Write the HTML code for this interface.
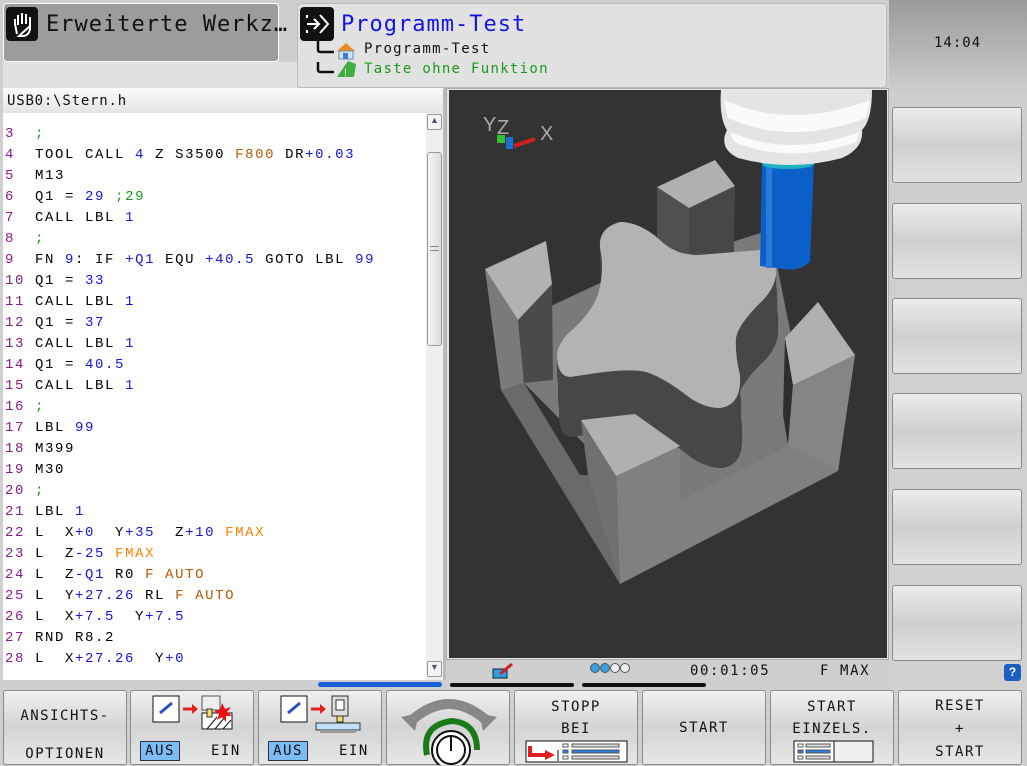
<!DOCTYPE html>
<html><head><meta charset="utf-8"><style>
*{margin:0;padding:0;box-sizing:border-box}
body{width:1027px;height:765px;background:#cfcfcf;position:relative;overflow:hidden;font-family:"Liberation Sans","DejaVu Sans",sans-serif}
.abs{position:absolute}
.mono{font-family:"DejaVu Sans Mono","Liberation Mono",monospace}
pre{font-family:"Liberation Mono",monospace;font-size:14px;letter-spacing:1.6px;line-height:21px;color:#000}
.n{color:#8b1a8b}.b{color:#1515e0}.g{color:#1a9a1a}.o{color:#ff7f00}.br{color:#b35c00}
.sk{position:absolute;top:690px;height:75px;width:124px;border:1px solid #8a8a8a;border-radius:3px;background:linear-gradient(#f0f0f0,#d4d4d4 50%,#e6e6e6);font-family:"DejaVu Sans Mono","Liberation Mono",monospace;font-size:14px;letter-spacing:1.5px;text-align:center;color:#111}
.rb{position:absolute;left:892px;width:130px;height:76px;border:1px solid #8a8a8a;border-radius:3px;background:linear-gradient(#ececec,#cfcfcf 50%,#e2e2e2)}
.aus{position:absolute;background:#7ebcf5;border:1px solid #333;width:40px;height:20px;font-size:14px;line-height:18px}
</style></head><body>
<div class="abs" style="left:297px;top:3px;width:590px;height:85px;background:#e2e2e2;border-radius:4px;border:1px solid #bbb"></div>
<div class="abs" style="left:3px;top:62px;width:294px;height:26px;background:#e2e2e2"></div>
<div class="abs" style="left:3px;top:3px;width:276px;height:59px;background:#9c9c9c;border-radius:4px;border:1px solid #fff"></div>
<div class="abs" style="left:6px;top:7px;width:32px;height:34px;background:#111;border-radius:4px"></div>
<svg class="abs" style="left:6px;top:7px" width="32" height="34"><path d="M11 27 L9 17 L9 12 M12 18 L12 8 M16 17 L16 6 M20 17 L20 7 M24 19 L24 10 L24 22 Q23 28 18 29 L13 29 Z" fill="none" stroke="#fff" stroke-width="2"/></svg>
<div class="abs mono" style="left:46px;top:12px;font-size:22px;letter-spacing:1px;color:#111">Erweiterte Werkz…</div>
<div class="abs" style="left:300px;top:7px;width:34px;height:34px;background:#111;border-radius:4px"></div>
<svg class="abs" style="left:300px;top:7px" width="34" height="34"><path d="M7 17 H19 M14 12 L19 17 L14 22" fill="none" stroke="#fff" stroke-width="2"/><path d="M20 8 L28 17 L20 26" fill="none" stroke="#fff" stroke-width="2"/><path d="M7 8 V11 M7 23 V26" stroke="#fff" stroke-width="2"/></svg>
<div class="abs mono" style="left:341px;top:12px;font-size:22px;letter-spacing:1px;color:#1515e0">Programm-Test</div>
<svg class="abs" style="left:312px;top:40px" width="50" height="40"><path d="M6 0 V10 Q6 12 9 12 H22 M6 22 V30 Q6 32 9 32 H22" fill="none" stroke="#111" stroke-width="2.5"/>
<path d="M25 11 L34 3 L43 11 Z" fill="#f08a20"/><rect x="27" y="11" width="14" height="8" fill="#cfe4f7" stroke="#6b8fb0"/><rect x="31" y="13" width="5" height="6" fill="#3a7ad0"/>
<path d="M25 37 L36 21 L44 24 L42 37 Z" fill="#3fae3f"/><text x="32" y="36" font-size="10" fill="#fff" font-family="Liberation Sans">!</text></svg>
<div class="abs mono" style="left:364px;top:41px;font-size:14px;letter-spacing:1.3px;color:#111">Programm-Test</div>
<div class="abs mono" style="left:364px;top:61px;font-size:14px;letter-spacing:1.3px;color:#1a9a1a">Taste ohne Funktion</div>
<div class="abs" style="left:889px;top:0;width:138px;height:690px;background:linear-gradient(#9a9a9a,#cfcfcf 95px,#d0d0d0)"></div>
<div class="abs mono" style="left:934px;top:35px;font-size:14px;letter-spacing:1px;color:#111">14:04</div>
<div class="rb" style="top:107px"></div><div class="rb" style="top:203px"></div><div class="rb" style="top:298px"></div><div class="rb" style="top:393px"></div><div class="rb" style="top:489px"></div><div class="rb" style="top:585px"></div>
<div class="abs" style="left:1004px;top:664px;width:17px;height:17px;background:#1a5fc0;border-radius:3px;color:#fff;font-size:12px;font-weight:bold;text-align:center;line-height:17px">?</div>
<div class="abs" style="left:3px;top:88px;width:440px;height:25px;background:linear-gradient(#fafafa,#e4e4e4)"></div>
<div class="abs mono" style="left:7px;top:93px;font-size:14px;letter-spacing:0.8px;color:#111">USB0:\Stern.h</div>
<div class="abs" style="left:3px;top:113px;width:440px;height:567px;background:#fff;border-right:1px solid #aaa"></div>
<div class="abs" style="left:443px;top:88px;width:3px;height:592px;background:#bbb"></div>
<pre class="abs" style="left:5px;top:124px"><span class="n">3</span>  <span class="g">;</span>
<span class="n">4</span>  TOOL CALL <span class="b">4</span> Z S3500 <span class="br">F800</span> DR<span class="b">+0.03</span>
<span class="n">5</span>  M13
<span class="n">6</span>  Q1 = <span class="b">29</span> <span class="g">;29</span>
<span class="n">7</span>  CALL LBL <span class="b">1</span>
<span class="n">8</span>  <span class="g">;</span>
<span class="n">9</span>  FN <span class="b">9</span>: IF <span class="b">+Q1</span> EQU <span class="b">+40.5</span> GOTO LBL <span class="b">99</span>
<span class="n">10</span> Q1 = <span class="b">33</span>
<span class="n">11</span> CALL LBL <span class="b">1</span>
<span class="n">12</span> Q1 = <span class="b">37</span>
<span class="n">13</span> CALL LBL <span class="b">1</span>
<span class="n">14</span> Q1 = <span class="b">40.5</span>
<span class="n">15</span> CALL LBL <span class="b">1</span>
<span class="n">16</span> <span class="g">;</span>
<span class="n">17</span> LBL <span class="b">99</span>
<span class="n">18</span> M399
<span class="n">19</span> M30
<span class="n">20</span> <span class="g">;</span>
<span class="n">21</span> LBL <span class="b">1</span>
<span class="n">22</span> L  X<span class="b">+0</span>  Y<span class="b">+35</span>  Z<span class="b">+10</span> <span class="o">FMAX</span>
<span class="n">23</span> L  Z<span class="b">-25</span> <span class="o">FMAX</span>
<span class="n">24</span> L  Z<span class="b">-Q1</span> R0 <span class="br">F AUTO</span>
<span class="n">25</span> L  Y<span class="b">+27.26</span> RL <span class="br">F AUTO</span>
<span class="n">26</span> L  X<span class="b">+7.5</span>  Y<span class="b">+7.5</span>
<span class="n">27</span> RND R8.2
<span class="n">28</span> L  X<span class="b">+27.26</span>  Y<span class="b">+0</span></pre>
<div class="abs" style="left:426px;top:113px;width:17px;height:567px;background:#efefef"></div>
<div class="abs" style="left:427px;top:114px;width:15px;height:16px;border:1px solid #999;border-radius:2px;background:#f4f4f4;font-size:9px;text-align:center;color:#557">▲</div>
<div class="abs" style="left:427px;top:152px;width:15px;height:194px;border:1px solid #999;border-radius:3px;background:linear-gradient(90deg,#f4f4f4,#dcdcdc)"></div>
<div class="abs" style="left:430px;top:246px;width:9px;height:5px;border-top:1px solid #888;border-bottom:1px solid #888"></div>
<div class="abs" style="left:427px;top:661px;width:15px;height:16px;border:1px solid #999;border-radius:2px;background:#f4f4f4;font-size:9px;text-align:center;color:#557">▼</div>
<div class="abs" style="left:446px;top:88px;width:443px;height:572px;background:#e8e8e8;border:1px solid #aaa"></div>
<svg class="abs" style="left:449px;top:90px" width="438" height="568" viewBox="449 90 438 568">
<defs><path id="st" d="M598,294 Q605,270 600,248 Q598,228 620,222 Q640,222 660,240 Q675,255 698,255 L760,250 Q778,252 776,275 Q774,290 760,303 Q738,325 736,338 Q735,355 740,375 Q742,405 720,408 Q705,408 690,398 Q665,378 646,372 Q630,368 590,374 L570,377 Q557,376 557,355 Q558,342 572,330 Q592,312 598,294 Z"/></defs>
<rect x="449" y="90" width="438" height="568" fill="#333"/>
<polygon points="518,320 553,305 598,284 770,230 790,330 793,385 788,445 680,500 616,476 524,383" fill="#7a7a7a"/>
<polygon points="657,187 689,208 689,320 657,300" fill="#505050"/>
<polygon points="689,208 735,186 733,300 689,320" fill="#474747"/>
<polygon points="657,187 715,160 735,186 689,208" fill="#b0b0b0"/>
<polygon points="501,390 524,383 580,475 616,476 620,584" fill="#6a6a6a"/>
<polygon points="616,476 680,446 680,500 788,445 793,385 855,355 838,471 620,584" fill="#808080"/>
<polygon points="485,269 518,320 524,383 501,390" fill="#7a7a7a"/>
<polygon points="518,320 552,284 553,380 524,383" fill="#4a4a4a"/>
<polygon points="485,269 546,241 552,284 518,320" fill="#b2b2b2"/>
<polygon points="785,338 793,385 788,445 783,415" fill="#2e2e2e"/>
<polygon points="793,385 855,355 838,471 788,445" fill="#858585"/>
<polygon points="785,338 818,302 855,355 793,385" fill="#b0b0b0"/>
<g fill="#474747">
<use href="#st" transform="translate(2,60)"/><use href="#st" transform="translate(2,54)"/><use href="#st" transform="translate(2,48)"/><use href="#st" transform="translate(1,42)"/><use href="#st" transform="translate(1,36)"/><use href="#st" transform="translate(1,30)"/><use href="#st" transform="translate(1,24)"/><use href="#st" transform="translate(0,18)"/><use href="#st" transform="translate(0,12)"/><use href="#st" transform="translate(0,6)"/>
</g>
<polygon points="581,420 635,414 680,446 616,476" fill="#b0b0b0"/>
<polygon points="581,420 616,476 620,584 588,475" fill="#707070"/>
<use href="#st" fill="#b3b3b3"/>
<path d="M762,160 L814,160 L810,262 Q798,272 784,269 L760,266 Z" fill="#0a60c8"/>
<rect x="766" y="160" width="6" height="108" fill="#2a7ad8"/>
<ellipse cx="788" cy="164" rx="26" ry="5" fill="#20b0c0"/>
<path d="M721,90 L872,90 Q872,120 862,130 Q864,148 842,158 Q790,172 738,158 Q718,148 727,130 Q719,118 721,90 Z" fill="#e4e4e4"/>
<path d="M724,100 Q790,130 870,100 L866,118 Q790,146 728,118 Z" fill="#fafafa"/>
<path d="M730,132 Q790,158 860,132 L856,142 Q790,165 734,142 Z" fill="#fafafa"/>
<text x="483" y="131" font-size="20" fill="#aaa" font-family="Liberation Sans">Y</text>
<text x="497" y="134" font-size="20" fill="#aaa" font-family="Liberation Sans">Z</text>
<text x="540" y="140" font-size="20" fill="#aaa" font-family="Liberation Sans">X</text>
<path d="M514,146 L535,139" stroke="#d02020" stroke-width="4"/>
<rect x="497" y="135" width="8" height="8" fill="#30c030"/>
<rect x="506" y="137" width="7" height="12" fill="#1a70d0"/>
</svg>
<svg class="abs" style="left:492px;top:662px" width="26" height="20"><rect x="1" y="7" width="14" height="9" fill="#2aa0e0" stroke="#123" stroke-width="1"/><path d="M8 12 L20 2" stroke="#d02020" stroke-width="3"/></svg>
<div class="abs" style="left:590px;top:663px;font-size:0">
<span style="display:inline-block;width:10px;height:10px;border-radius:50%;background:#3aa0e0;border:1px solid #555"></span><span style="display:inline-block;width:10px;height:10px;border-radius:50%;background:#3aa0e0;border:1px solid #555"></span><span style="display:inline-block;width:10px;height:10px;border-radius:50%;background:#eee;border:1px solid #555"></span><span style="display:inline-block;width:10px;height:10px;border-radius:50%;background:#eee;border:1px solid #555"></span></div>
<div class="abs mono" style="left:690px;top:663px;font-size:14px;letter-spacing:1.6px;color:#111">00:01:05</div>
<div class="abs mono" style="left:820px;top:663px;font-size:14px;letter-spacing:1.6px;color:#111">F MAX</div>
<div class="abs" style="left:318px;top:682px;width:124px;height:5px;background:#1a60d8;border-radius:3px"></div>
<div class="abs" style="left:450px;top:683px;width:124px;height:4px;background:#111;border-radius:2px"></div>
<div class="abs" style="left:582px;top:683px;width:124px;height:4px;background:#111;border-radius:2px"></div>
<div class="sk" style="left:3px;line-height:20px;padding-top:15px">ANSICHTS-<br><span style="display:block;margin-top:18px">OPTIONEN</span></div>
<div class="sk" style="left:130px">
<svg class="abs" style="left:21px;top:4px" width="84" height="36"><rect x="1" y="1" width="26" height="26" fill="#fff" stroke="#111"/><path d="M8 18 L20 8" stroke="#2a50c0" stroke-width="3"/><path d="M31 14 H41" stroke="#e02020" stroke-width="3"/><path d="M40 9 L46 14 L40 19 Z" fill="#e02020"/><rect x="50" y="1" width="18" height="14" fill="#eee" stroke="#555"/><rect x="50" y="18" width="30" height="16" fill="#fff" stroke="#111"/><path d="M55 34 L65 22 M63 34 L73 22 M71 34 L79 25" stroke="#111"/><rect x="55" y="14" width="5" height="8" fill="#f0e060" stroke="#333"/><path d="M70 8 l3 6 6-2-4 5 5 4-6 0 0 6-4-5-5 3 2-6-5-3 6-1z" fill="#f01010"/></svg>
<div class="aus" style="left:9px;top:50px">AUS</div><div class="abs" style="left:80px;top:52px">EIN</div></div>
<div class="sk" style="left:258px">
<svg class="abs" style="left:21px;top:4px" width="84" height="38"><rect x="1" y="1" width="26" height="26" fill="#fff" stroke="#111"/><path d="M8 18 L20 8" stroke="#2a50c0" stroke-width="3"/><path d="M31 14 H41" stroke="#e02020" stroke-width="3"/><path d="M40 9 L46 14 L40 19 Z" fill="#e02020"/><rect x="52" y="1" width="16" height="20" fill="#ddd" stroke="#333"/><rect x="56" y="5" width="8" height="10" fill="#fff" stroke="#333"/><rect x="57" y="21" width="6" height="6" fill="#f0e060" stroke="#333"/><rect x="36" y="28" width="44" height="7" fill="#bfe0f7" stroke="#333"/><rect x="40" y="35" width="36" height="4" fill="#999"/></svg>
<div class="aus" style="left:9px;top:50px">AUS</div><div class="abs" style="left:80px;top:52px">EIN</div></div>
<div class="sk" style="left:386px">
<svg class="abs" style="left:10px;top:4px" width="104" height="70"><path d="M14 26 Q52 -8 90 26" fill="none" stroke="#888" stroke-width="10"/><path d="M4 22 L18 36 L22 18 Z M100 22 L86 36 L82 18 Z" fill="#888"/><path d="M30 60 Q24 30 55 26 Q80 28 80 55" fill="none" stroke="#1a7a1a" stroke-width="6"/><circle cx="54" cy="55" r="19" fill="#fff" stroke="#111" stroke-width="2"/><circle cx="54" cy="55" r="14" fill="none" stroke="#111" stroke-width="2"/><path d="M54 42 V56" stroke="#111" stroke-width="2"/></svg></div>
<div class="sk" style="left:514px;line-height:22px;padding-top:5px">STOPP<br>BEI
<svg class="abs" style="left:10px;top:49px" width="104" height="24"><rect x="1" y="1" width="101" height="21" fill="#fff" stroke="#111"/><path d="M5 6 V15 H22" stroke="#e02020" stroke-width="4" fill="none"/><path d="M20 10 L30 15 L20 20 Z" fill="#e02020"/><path d="M33 10 V21" stroke="#111"/><rect x="38" y="4" width="5" height="3" fill="#fff" stroke="#555"/><rect x="38" y="10" width="5" height="3" fill="#2a80e0" stroke="#555"/><rect x="38" y="16" width="5" height="3" fill="#fff" stroke="#555"/><rect x="47" y="4" width="47" height="3" fill="#ddd" stroke="#555"/><rect x="47" y="10" width="47" height="3" fill="#2a80e0" stroke="#555"/><rect x="47" y="16" width="47" height="3" fill="#ddd" stroke="#555"/></svg></div>
<div class="sk" style="left:642px;line-height:75px">START</div>
<div class="sk" style="left:770px;line-height:22px;padding-top:5px">START<br>EINZELS.
<svg class="abs" style="left:22px;top:49px" width="82" height="24"><rect x="1" y="1" width="79" height="21" fill="#f0f0f0" stroke="#111"/><rect x="1" y="1" width="40" height="21" fill="#fff" stroke="#111"/><rect x="5" y="4" width="5" height="3" fill="#fff" stroke="#555"/><rect x="5" y="10" width="5" height="3" fill="#2a80e0" stroke="#555"/><rect x="5" y="16" width="5" height="3" fill="#fff" stroke="#555"/><rect x="13" y="4" width="24" height="3" fill="#ddd" stroke="#555"/><rect x="13" y="10" width="24" height="3" fill="#2a80e0" stroke="#555"/><rect x="13" y="16" width="24" height="3" fill="#ddd" stroke="#555"/></svg></div>
<div class="sk" style="left:898px;line-height:23px;padding-top:4px">RESET<br>+<br>START</div>
</body></html>
